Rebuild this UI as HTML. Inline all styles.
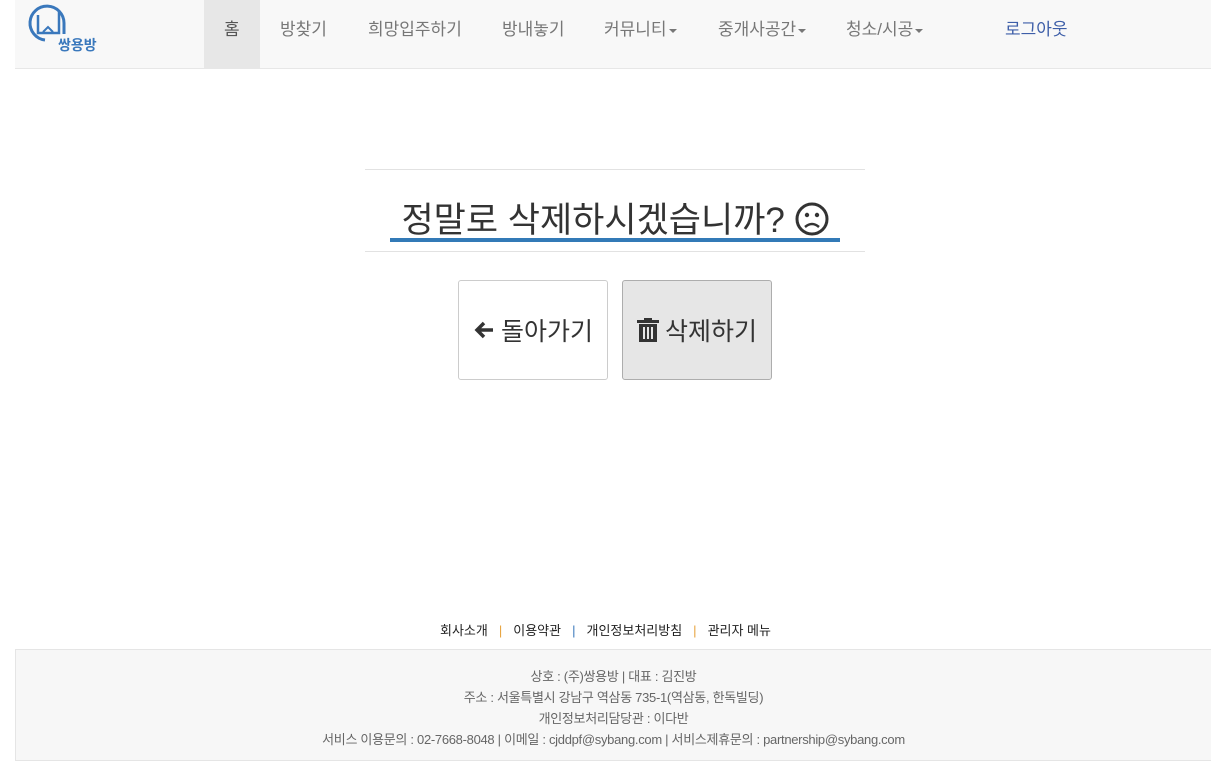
<!DOCTYPE html>
<html><head><meta charset="utf-8"><style>
*{box-sizing:border-box;margin:0;padding:0}
body{width:1211px;height:771px;background:#fff;font-family:"Liberation Sans","Noto Sans CJK KR",sans-serif;color:#333;position:relative;overflow:hidden}
.nav{position:absolute;left:15px;top:0;width:1196px;height:69px;background:#f8f8f8;border-bottom:1px solid #e7e7e7}
.nav a{position:absolute;top:0;height:68px;line-height:60px;font-size:17px;color:#777;white-space:nowrap}
.car{display:inline-block;border-top:4px solid #777;border-left:4px solid transparent;border-right:4px solid transparent;vertical-align:middle;margin-left:2px}
.hr{position:absolute;left:365px;width:500px;height:1px;background:#e2e2e2}
h1{position:absolute;left:365px;width:500px;top:192px;text-align:center;font-weight:normal;font-size:35px;color:#333;white-space:nowrap}
.ul{position:absolute;left:390px;top:238px;width:450px;height:4px;background:#337ab7}
.btn{position:absolute;top:280px;width:150px;height:100px;border:1px solid #ccc;border-radius:3px;font-size:25px;color:#333;display:flex;align-items:center;justify-content:center;gap:6px}
.links{position:absolute;top:620px;left:0;width:1211px;text-align:center;font-size:13px;color:#222}
.links i{color:#e8a33d;font-style:normal;margin:0 11px}
.foot{position:absolute;left:15px;top:649px;width:1196px;height:112px;background:#f7f7f7;border:1px solid #e5e5e5;border-right:none;text-align:center;font-size:13px;color:#666;line-height:21px;padding-top:16px;letter-spacing:-0.3px}
</style></head><body>
<div class="nav">
<svg style="position:absolute;left:0;top:0" width="100" height="60" viewBox="0 0 100 60">
<path d="M30 40 A17 17 0 1 1 49 23 L49 34" fill="none" stroke="#3a78bc" stroke-width="3"/>
<path d="M23 15 L23 33 L44 33 L44 12" fill="none" stroke="#3a78bc" stroke-width="2.5"/>
<path d="M28 32 L33 27 L38 32" fill="none" stroke="#3a78bc" stroke-width="2"/>
<text x="43" y="50" font-size="14" font-weight="bold" fill="#3a78bc" font-family="Noto Sans CJK KR,sans-serif">쌍용방</text>
</svg>
<div style="position:absolute;left:189px;top:0;width:56px;height:68px;background:#e7e7e7"></div>
<a style="left:209px;color:#555">홈</a>
<a style="left:265px">방찾기</a>
<a style="left:353px">희망입주하기</a>
<a style="left:487px">방내놓기</a>
<a style="left:589px">커뮤니티<span class="car"></span></a>
<a style="left:703px">중개사공간<span class="car"></span></a>
<a style="left:831px">청소/시공<span class="car"></span></a>
<a style="left:990px;color:#3d5ea8">로그아웃</a>
</div>
<div class="hr" style="top:169px"></div>
<h1>정말로 삭제하시겠습니까? <svg width="34" height="34" viewBox="0 0 34 34" style="vertical-align:-4px"><circle cx="17" cy="17" r="15" fill="none" stroke="#333" stroke-width="3"/><circle cx="12" cy="13" r="2.2" fill="#333"/><circle cx="22" cy="13" r="2.2" fill="#333"/><path d="M10 25 Q17 19 24 25" fill="none" stroke="#333" stroke-width="2.5"/></svg></h1>
<div class="ul"></div>
<div class="hr" style="top:251px"></div>
<div class="btn" style="left:458px;background:#fff"><svg width="22" height="22" viewBox="0 0 22 22"><path d="M20 11H5M11 4L4 11L11 18" fill="none" stroke="#333" stroke-width="3.5"/></svg>돌아가기</div>
<div class="btn" style="left:622px;background:#e6e6e6;border-color:#adadad"><svg width="22" height="24" viewBox="0 0 22 24"><rect x="0" y="2" width="22" height="3" fill="#333"/><rect x="7" y="0" width="8" height="3" fill="#333"/><path d="M2 6H20V24H2Z" fill="#333"/><rect x="6" y="9" width="2" height="12" fill="#e6e6e6"/><rect x="10" y="9" width="2" height="12" fill="#e6e6e6"/><rect x="14" y="9" width="2" height="12" fill="#e6e6e6"/></svg>삭제하기</div>
<div class="links">회사소개<i>|</i>이용약관<i style="color:#3a78bc">|</i>개인정보처리방침<i>|</i>관리자 메뉴</div>
<div class="foot">상호 : (주)쌍용방 | 대표 : 김진방<br>주소 : 서울특별시 강남구 역삼동 735-1(역삼동, 한독빌딩)<br>개인정보처리담당관 : 이다반<br>서비스 이용문의 : 02-7668-8048 | 이메일 : cjddpf@sybang.com | 서비스제휴문의 : partnership@sybang.com</div>
</body></html>
